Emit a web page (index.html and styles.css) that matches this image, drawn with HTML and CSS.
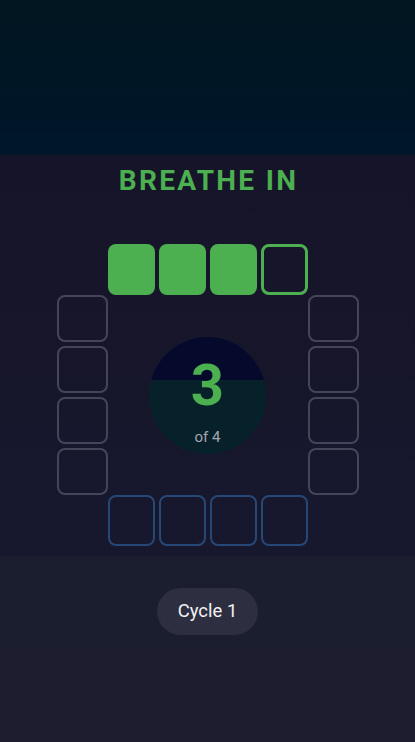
FILE: index.html
```html
<!DOCTYPE html>
<html lang="en">
<head>
<meta charset="utf-8">
<title>Breathe</title>
<link rel="stylesheet" href="styles.css">
</head>
<body>
<div class="app">
  <header class="top"></header>
  <main class="stage">
    <h1 class="phase">BREATHE IN</h1>
    <div class="box">
      <div class="side side-top">
        <span class="cell h done"></span>
        <span class="cell h done"></span>
        <span class="cell h done"></span>
        <span class="cell h current"></span>
      </div>
      <div class="side side-left">
        <span class="cell v idle"></span>
        <span class="cell v idle"></span>
        <span class="cell v idle"></span>
        <span class="cell v idle"></span>
      </div>
      <div class="center">
        <div class="orb">
          <span class="count">3</span>
          <span class="total">of 4</span>
        </div>
      </div>
      <div class="side side-right">
        <span class="cell v idle"></span>
        <span class="cell v idle"></span>
        <span class="cell v idle"></span>
        <span class="cell v idle"></span>
      </div>
      <div class="side side-bottom">
        <span class="cell h hold"></span>
        <span class="cell h hold"></span>
        <span class="cell h hold"></span>
        <span class="cell h hold"></span>
      </div>
    </div>
  </main>
  <section class="cycle-bar">
    <div class="pill">Cycle 1</div>
  </section>
  <footer class="rest"></footer>
</div>
</body>
</html>
```

FILE: styles.css
```css
* { box-sizing: border-box; }
html, body {
  margin: 0;
  padding: 0;
  height: 100%;
}
body {
  background: #1e1d2f;
  font-family: Roboto, "Noto Sans", "Liberation Sans", sans-serif;
  color: #fff;
}
.app {
  display: flex;
  flex-direction: column;
  min-height: 742px;
}
.top {
  height: 155px;
  background: linear-gradient(180deg, #011620 0%, #00162a 100%);
}
.stage {
  background: linear-gradient(180deg, #161428 0%, #17182e 100%);
  padding: 10px 0 10px;
  display: flex;
  flex-direction: column;
  align-items: center;
}
.phase {
  margin: 0;
  font-size: 28px;
  line-height: 32px;
  font-weight: 700;
  letter-spacing: 2.3px;
  color: #4caf50;
  padding-left: 2px;
}
.box {
  margin-top: 47px;
  display: grid;
  grid-template-columns: 51px 200px 51px;
  grid-template-rows: 51px 200px 51px;
}
.side { display: flex; gap: 4px; }
.side-top { grid-column: 2; grid-row: 1; }
.side-bottom { grid-column: 2; grid-row: 3; }
.side-left { grid-column: 1; grid-row: 2; flex-direction: column; }
.side-right { grid-column: 3; grid-row: 2; flex-direction: column; }
.cell {
  display: block;
  border-radius: 8px;
}
.cell.h { width: 47px; height: 51px; }
.cell.v { width: 51px; height: 47px; }
.done { background: #4caf50; }
.current { border: 3px solid #4caf50; }
.idle { border: 2px solid #45455a; }
.hold { border: 2px solid #264877; }
.center {
  grid-column: 2;
  grid-row: 2;
  display: flex;
  align-items: center;
  justify-content: center;
}
.orb {
  width: 117px;
  height: 117px;
  border-radius: 50%;
  background: linear-gradient(180deg, #050a2c 0%, #050a2c 37%, #07212a 37%, #07212a 100%);
  display: flex;
  flex-direction: column;
  align-items: center;
  padding-top: 19px;
}
.count {
  font-size: 58px;
  line-height: 58px;
  font-weight: 700;
  color: #4caf50;
}
.total {
  margin-top: 14px;
  font-size: 15px;
  line-height: 18px;
  color: #a3a6b0;
}
.cycle-bar {
  background: #1a1e2e;
  height: 92px;
  display: flex;
  justify-content: center;
  padding-top: 32px;
}
.pill {
  height: 47px;
  padding: 0 21px;
  border-radius: 24px;
  background: #2d2e3f;
  font-size: 18.5px;
  line-height: 47px;
  color: #f2f2f5;
}
.rest {
  flex: 1;
  background: #1e1d2f;
}
```
